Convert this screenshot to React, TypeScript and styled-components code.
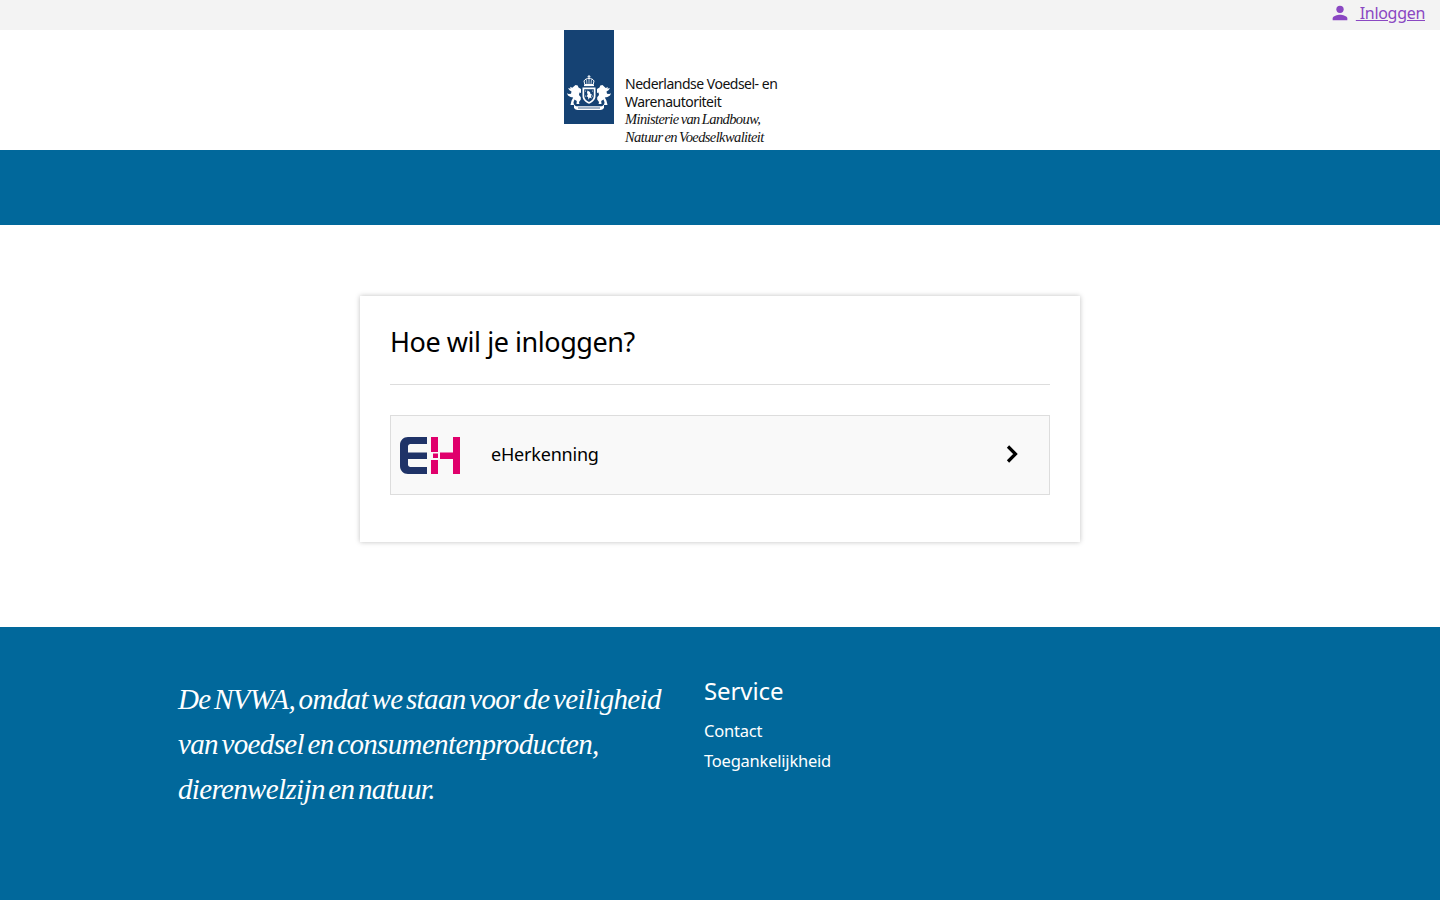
import React from 'react'
import styled, { createGlobalStyle } from 'styled-components';

const GlobalStyle = createGlobalStyle`
  html, body { margin: 0; padding: 0; background: #ffffff; }
  body { font-family: "Noto Sans", "Open Sans", sans-serif; color: #000000; }
`;

const Page = styled.div`
  display: flex;
  flex-direction: column;
  height: 900px;
  overflow: hidden;
`;

const TopBar = styled.div`
  height: 30px;
  box-sizing: border-box;
  background: #f3f3f3;
  display: flex;
  justify-content: flex-end;
  align-items: flex-start;
  padding: 2px 15px 0 0;
`;

const LoginLink = styled.a`
  display: flex;
  align-items: center;
  color: #8a47c2;
  font-size: 16px;
  line-height: 22px;
  letter-spacing: -0.3px;
  text-decoration: underline;
  white-space: pre;
  cursor: pointer;
`;

const PersonSvg = styled.svg`
  width: 22px;
  height: 22px;
  margin-right: 5px;
  fill: #8a47c2;
`;

const Header = styled.header`
  height: 120px;
  background: #ffffff;
  padding-left: 564px;
  display: flex;
  align-items: flex-start;
`;

const LogoBar = styled.div`
  width: 50px;
  height: 94px;
  background: #154273;
  display: flex;
  align-items: flex-end;
  justify-content: center;
  padding-bottom: 13px;
  box-sizing: border-box;
`;

const LogoText = styled.div`
  margin: 45px 0 0 11px;
  font-size: 14px;
  line-height: 17.5px;
  color: #111111;
  white-space: nowrap;
`;

const LogoLine = styled.div<{ $italic?: boolean }>`
  font-style: ${(props) => (props.$italic ? 'italic' : 'normal')};
  font-family: ${(props) => (props.$italic ? '"Liberation Serif", serif' : '"Noto Sans", sans-serif')};
  font-size: ${(props) => (props.$italic ? '14.5px' : '14px')};
  letter-spacing: ${(props) => (props.$italic ? '-0.6px' : '-0.5px')};
  word-spacing: ${(props) => (props.$italic ? '-1px' : '0')};
  padding-top: ${(props) => (props.$italic ? '1px' : '0')};
  margin-bottom: ${(props) => (props.$italic ? '-1px' : '0')};
`;

const Band = styled.div`
  height: 75px;
  background: #01689b;
`;

const Main = styled.main`
  flex: 1;
  display: flex;
  justify-content: center;
  align-items: flex-start;
  padding-top: 71px;
`;

const Card = styled.section`
  width: 720px;
  height: 246px;
  box-sizing: border-box;
  background: #ffffff;
  padding: 29px 30px 0;
  box-shadow: 0 0 5px rgba(0, 0, 0, 0.25);
`;

const Title = styled.h1`
  margin: 0;
  height: 59px;
  font-size: 27px;
  line-height: 33px;
  font-weight: 400;
  letter-spacing: -0.45px;
  border-bottom: 1px solid #dddddd;
`;

const ProviderButton = styled.button`
  width: 100%;
  height: 80px;
  margin-top: 30px;
  padding: 0 30px 2px 9px;
  display: flex;
  align-items: center;
  background: #f9f9f9;
  border: 1px solid #dddddd;
  font-family: inherit;
  color: #000000;
  cursor: pointer;
`;

const ProviderName = styled.span`
  flex: 1;
  margin-left: 30px;
  font-size: 18px;
  letter-spacing: -0.2px;
  text-align: left;
`;

const EHSvg = styled.svg`
  width: 61px;
  height: 37px;
  margin-top: 2px;
`;

const Footer = styled.footer`
  height: 273px;
  background: #01689b;
  color: #ffffff;
  padding: 45px 0 0 178px;
  box-sizing: border-box;
  display: flex;
`;

const Quote = styled.p`
  width: 496px;
  margin: 5px 30px 0 0;
  font-family: "Liberation Serif", serif;
  font-style: italic;
  font-size: 29px;
  line-height: 45px;
  letter-spacing: -0.65px;
  word-spacing: -3px;
`;

const ServiceColumn = styled.nav`
  display: flex;
  flex-direction: column;
`;

const ServiceTitle = styled.h2`
  margin: 0 0 6px;
  font-size: 24px;
  line-height: 38px;
  font-weight: 400;
  letter-spacing: -0.1px;
`;

const ServiceLink = styled.a`
  color: #ffffff;
  font-size: 16.5px;
  line-height: 30px;
  letter-spacing: -0.22px;
  cursor: pointer;
`;

const PersonIcon = () => (
  <PersonSvg viewBox="0 0 24 24">
    <circle cx="12" cy="8" r="4" />
    <path d="M12 14c-2.670 0-8 1.340-8 4v2h16v-2c0-2.660-5.330-4-8-4z" />
  </PersonSvg>
);

const Crest = () => (
  <svg width="44" height="36" viewBox="0 0 44 36" fill="#ffffff">
    {/* crown */}
    <path d="M21.500 0h1v1.200h1v1h-1v1.300h-1V2.200h-1v-1h1z" />
    <path d="M17 6c1-2 3-2.500 5-2.500S26 4 27 6l-.8 3.500h-8.400z" fill="none" stroke="#ffffff" strokeWidth="1" />
    <path d="M22 3.500v6M19.500 4.500 20 9.500M24.500 4.500 24 9.500" stroke="#ffffff" strokeWidth=".7" />
    <rect x="17" y="9.500" width="10" height="1.600" />
    {/* shield */}
    <path d="M15.500 12.500h13v8.500c0 4-3.200 6.200-6.500 7.800-3.300-1.600-6.500-3.800-6.500-7.800z" />
    <path d="M17.200 14.200h9.600v6.800c0 3-2.400 4.700-4.800 6-2.400-1.300-4.800-3-4.800-6z" fill="#154273" />
    <path d="M20.500 15.500l2.500 1.500.5 2 1.500.5-1 1.500.8 2.500-2-1-1.300 2.200-.5-2.700-1.500-.7 1.200-1.500-.7-2.300z" />
    <circle cx="18.500" cy="16" r=".5" />
    <circle cx="25.500" cy="16" r=".5" />
    <circle cx="18.500" cy="21" r=".5" />
    <circle cx="25.500" cy="21" r=".5" />
    {/* lions */}
    <path d="M8.500 10l2.200.6.8 2 2.500 1.500v4l-1.500-.6-.5 2.500 1.800 2.200v2.300l-1.800 2.500.4 2H9.500l.3-3-2.300-1.500-1 2.800L7 30H3.500l1-4.200 1.700-3.200-2.700-.6-2.500-1.500L0 18.300l1.700.8 2.300-.4.500-2.300-2-1.200L1 13.200l2.700.3L3 11.800l2.300 1z" />
    <path d="M35.500 10l-2.200.6-.8 2-2.500 1.500v4l1.500-.6.5 2.500-1.800 2.200v2.300l1.800 2.500-.4 2h2.900l-.3-3 2.300-1.500 1 2.800L37 30h3.500l-1-4.200-1.700-3.200 2.700-.6 2.500-1.500 1-2.200-1.700.8-2.300-.4-.5-2.300 2-1.200 1.500-1.900-2.700.3.7-1.700-2.300 1z" />
    {/* ribbon */}
    <path d="M7 29.500c1 1.300 2 1.800 3.500 1.800h23c1.500 0 2.500-.5 3.500-1.800V33c-1 1.300-2 2-3.500 2h-23C9 35 8 34.300 7 33z" />
    <rect x="11" y="32.600" width="22" height=".8" fill="#154273" />
  </svg>
);

const EHLogo = () => (
  <EHSvg viewBox="0 0 61 37">
    <path d="M27 0H8C3.500 0 0 3.500 0 8v21c0 4.500 3.500 8 8 8h19v-7H10.500C9 30 8 29 8 27.500V22h2v-6.500H8V9.500C8 8 9 7 10.500 7H27z" fill="#1f3368" />
    <rect x="10" y="15.500" width="17" height="6.500" fill="#1f3368" />
    <rect x="31" y="0" width="7" height="15" fill="#e0006c" />
    <rect x="33" y="16.500" width="5" height="4.500" fill="#e0006c" />
    <rect x="31" y="23" width="7" height="14" fill="#e0006c" />
    <rect x="40" y="15.500" width="13" height="6.500" fill="#e0006c" />
    <rect x="53" y="0" width="7" height="37" fill="#e0006c" />
  </EHSvg>
);

const Chevron = () => (
  <svg width="14" height="20" viewBox="0 0 14 20" fill="none" stroke="#000000" strokeWidth="3.200">
    <path d="M3 2.500l7.500 7.500L3 17.500" />
  </svg>
);

export default function App() {
  return (
    <Page>
      <GlobalStyle />
      <TopBar>
        <LoginLink>
          <PersonIcon />
          {' Inloggen'}
        </LoginLink>
      </TopBar>
      <Header>
        <LogoBar>
          <Crest />
        </LogoBar>
        <LogoText>
          <LogoLine>Nederlandse Voedsel- en</LogoLine>
          <LogoLine>Warenautoriteit</LogoLine>
          <LogoLine $italic>Ministerie van Landbouw,</LogoLine>
          <LogoLine $italic>Natuur en Voedselkwaliteit</LogoLine>
        </LogoText>
      </Header>
      <Band />
      <Main>
        <Card>
          <Title>Hoe wil je inloggen?</Title>
          <ProviderButton>
            <EHLogo />
            <ProviderName>eHerkenning</ProviderName>
            <Chevron />
          </ProviderButton>
        </Card>
      </Main>
      <Footer>
        <Quote>
          De NVWA, omdat we staan voor de veiligheid van voedsel en consumentenproducten, dierenwelzijn en natuur.
        </Quote>
        <ServiceColumn>
          <ServiceTitle>Service</ServiceTitle>
          <ServiceLink>Contact</ServiceLink>
          <ServiceLink>Toegankelijkheid</ServiceLink>
        </ServiceColumn>
      </Footer>
    </Page>
  );
}
